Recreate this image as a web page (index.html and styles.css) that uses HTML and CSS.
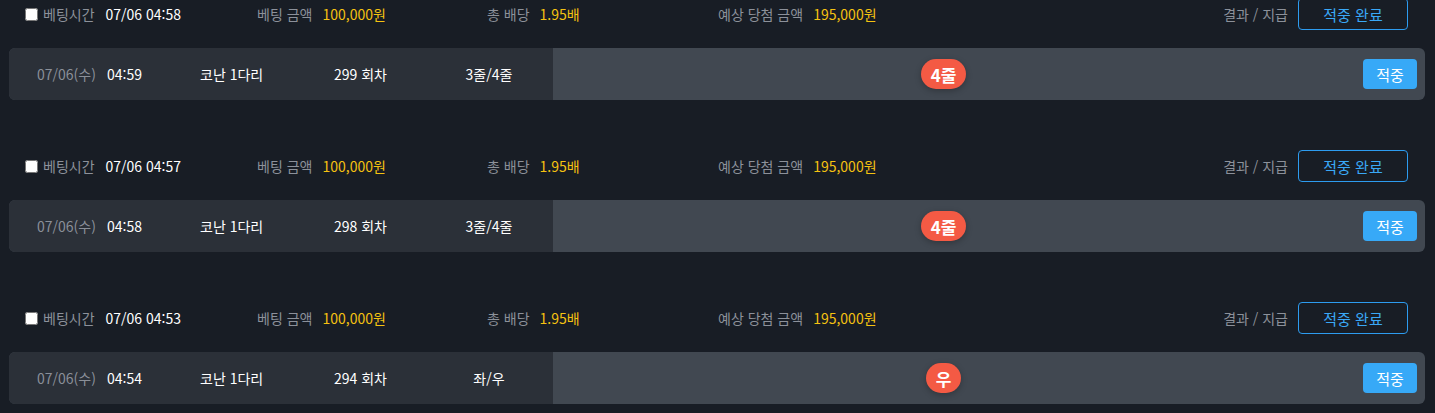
FILE: index.html
```html
<!DOCTYPE html>
<html lang="ko">
<head>
<meta charset="utf-8">
<title>베팅 내역</title>
<link rel="stylesheet" href="styles.css">
</head>
<body>
<div class="list">

  <div class="group">
    <div class="bet-head">
      <div class="col c1"><input type="checkbox" class="chk"><span class="lbl">베팅시간</span><span class="val">07/06 04:58</span></div>
      <div class="col c2"><span class="lbl">베팅 금액</span><span class="amt">100,000원</span></div>
      <div class="col c3"><span class="lbl">총 배당</span><span class="amt">1.95배</span></div>
      <div class="col c4"><span class="lbl">예상 당첨 금액</span><span class="amt">195,000원</span></div>
      <div class="col c5"><span class="lbl">결과 / 지급</span><button class="btn-outline">적중 완료</button></div>
    </div>
    <div class="bet-row">
      <div class="row-info">
        <span class="r-date">07/06(수)</span>
        <span class="r-time">04:59</span>
        <span class="r-name">코난 1다리</span>
        <span class="r-round">299 회차</span>
        <span class="r-pick">3줄/4줄</span>
      </div>
      <div class="row-result"><span class="badge">4줄</span></div>
      <div class="row-action"><button class="btn-hit">적중</button></div>
    </div>
  </div>

  <div class="group">
    <div class="bet-head">
      <div class="col c1"><input type="checkbox" class="chk"><span class="lbl">베팅시간</span><span class="val">07/06 04:57</span></div>
      <div class="col c2"><span class="lbl">베팅 금액</span><span class="amt">100,000원</span></div>
      <div class="col c3"><span class="lbl">총 배당</span><span class="amt">1.95배</span></div>
      <div class="col c4"><span class="lbl">예상 당첨 금액</span><span class="amt">195,000원</span></div>
      <div class="col c5"><span class="lbl">결과 / 지급</span><button class="btn-outline">적중 완료</button></div>
    </div>
    <div class="bet-row">
      <div class="row-info">
        <span class="r-date">07/06(수)</span>
        <span class="r-time">04:58</span>
        <span class="r-name">코난 1다리</span>
        <span class="r-round">298 회차</span>
        <span class="r-pick">3줄/4줄</span>
      </div>
      <div class="row-result"><span class="badge">4줄</span></div>
      <div class="row-action"><button class="btn-hit">적중</button></div>
    </div>
  </div>

  <div class="group">
    <div class="bet-head">
      <div class="col c1"><input type="checkbox" class="chk"><span class="lbl">베팅시간</span><span class="val">07/06 04:53</span></div>
      <div class="col c2"><span class="lbl">베팅 금액</span><span class="amt">100,000원</span></div>
      <div class="col c3"><span class="lbl">총 배당</span><span class="amt">1.95배</span></div>
      <div class="col c4"><span class="lbl">예상 당첨 금액</span><span class="amt">195,000원</span></div>
      <div class="col c5"><span class="lbl">결과 / 지급</span><button class="btn-outline">적중 완료</button></div>
    </div>
    <div class="bet-row">
      <div class="row-info">
        <span class="r-date">07/06(수)</span>
        <span class="r-time">04:54</span>
        <span class="r-name">코난 1다리</span>
        <span class="r-round">294 회차</span>
        <span class="r-pick">좌/우</span>
      </div>
      <div class="row-result"><span class="badge">우</span></div>
      <div class="row-action"><button class="btn-hit">적중</button></div>
    </div>
  </div>

</div>
</body>
</html>
```

FILE: styles.css
```css
* { box-sizing: border-box; }

html, body {
  margin: 0;
  padding: 0;
  background: #181d25;
  font-family: "Noto Sans CJK KR", "Noto Sans", sans-serif;
  font-size: 14px;
  color: #ffffff;
  overflow: hidden;
}

.list {
  margin-top: -2px;
  padding: 0 10px 0 9px;
  display: flex;
  flex-direction: column;
  gap: 50px;
}

.group {
  display: flex;
  flex-direction: column;
  gap: 18px;
}

.bet-head {
  height: 32px;
  display: flex;
  align-items: center;
  padding: 0 17px 0 16px;
  line-height: 1;
}

.col {
  display: flex;
  align-items: center;
  white-space: nowrap;
}

.c1 { width: 232px; }
.c2 { width: 230px; }
.c3 { width: 231px; }
.c4 { flex: 1; }
.c5 { justify-content: flex-end; }

.chk {
  width: 13px;
  height: 13px;
  margin: 0 5px 0 0;
  flex: none;
}

.lbl {
  color: #8c919a;
  margin-right: 10px;
}

.c1 .lbl { margin-right: 11px; }

.val { color: #ffffff; }

.amt { color: #f5c211; }

.btn-outline {
  width: 110px;
  height: 32px;
  border: 1px solid #2d9cf0;
  border-radius: 4px;
  background: transparent;
  color: #3aa8f7;
  font-family: inherit;
  font-size: 15px;
  padding: 0;
  cursor: pointer;
}

.bet-row {
  height: 52px;
  display: flex;
  border-radius: 6px;
  overflow: hidden;
  background: #414851;
}

.row-info {
  width: 544px;
  flex: none;
  background: #2b3038;
  display: flex;
  align-items: center;
  padding-left: 28px;
  white-space: nowrap;
}

.r-date { width: 70px; flex: none; color: #8a8f98; }
.r-time { width: 93px; flex: none; }
.r-name { width: 134px; flex: none; }
.r-round { width: 120px; flex: none; }
.r-pick { width: 70px; flex: none; text-align: center; }

.row-result {
  flex: 1;
  display: flex;
  align-items: center;
  justify-content: center;
}

.badge {
  height: 30px;
  min-width: 30px;
  padding: 0 10px;
  border-radius: 15px;
  background: #f45a44;
  color: #ffffff;
  font-weight: 700;
  font-size: 17px;
  display: inline-flex;
  align-items: center;
  justify-content: center;
  box-shadow: 0 2px 6px rgba(0, 0, 0, 0.25);
}

.row-action {
  width: 91px;
  flex: none;
  display: flex;
  align-items: center;
  justify-content: flex-end;
  padding-right: 8px;
}

.btn-hit {
  width: 54px;
  height: 30px;
  border: 0;
  border-radius: 4px;
  background: #37a9f7;
  color: #ffffff;
  font-family: inherit;
  font-size: 15px;
  padding: 0;
  cursor: pointer;
}
```
